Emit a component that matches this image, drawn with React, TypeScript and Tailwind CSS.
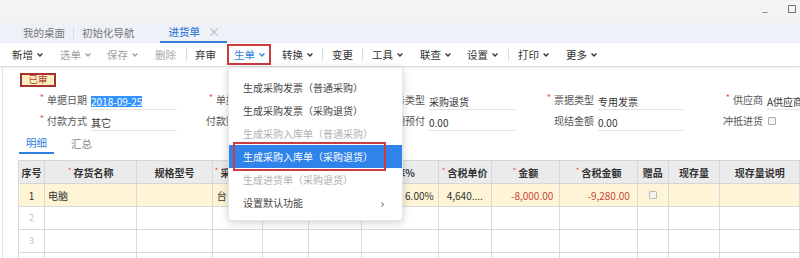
import React from "react";

type Field = {
  req?: boolean;
  label: string;
  value?: string;
  selected?: boolean;
  checkbox?: boolean;
};

const row1: Field[] = [
  { req: true, label: "单据日期", value: "2018-09-25", selected: true },
  { req: true, label: "单据编号", value: "" },
  { req: true, label: "业务类型", value: "采购退货" },
  { req: true, label: "票据类型", value: "专用发票" },
  { req: true, label: "供应商", value: "A供应商" },
];

const row2: Field[] = [
  { req: true, label: "付款方式", value: "其它" },
  { label: "付款账户名", value: "" },
  { label: "本期预付", value: "0.00" },
  { label: "现结金额", value: "0.00" },
  { label: "冲抵进货", checkbox: true },
];

const cols = [
  { w: "w-[26px]", title: "序号" },
  { w: "w-[93px]", title: "存货名称", req: true },
  { w: "w-[76px]", title: "规格型号" },
  { w: "w-[46px]", title: "采购单位", req: true, left: true },
  { w: "w-[46px]", title: "数量" },
  { w: "w-[54px]", title: "单价" },
  { w: "w-[77px]", title: "税率%" },
  { w: "w-[53px]", title: "含税单价", req: true },
  { w: "w-[69px]", title: "金额", req: true },
  { w: "w-[78px]", title: "含税金额", req: true },
  { w: "w-[31px]", title: "赠品" },
  { w: "w-[52px]", title: "现存量" },
  { w: "w-[80px]", title: "现存量说明" },
];

const menu = [
  { t: "生成采购发票（普通采购）" },
  { t: "生成采购发票（采购退货）" },
  { t: "生成采购入库单（普通采购）", off: true },
  { t: "生成采购入库单（采购退货）", on: true },
  { t: "生成进货单（采购退货）", off: true },
  { t: "设置默认功能", sub: true },
];

function Chev() {
  return (
    <svg width="6" height="4" viewBox="0 0 6 4" className="shrink-0">
      <path d="M0.6 0.6 L3 3 L5.4 0.6" stroke="currentColor" strokeWidth="1.4" fill="none" />
    </svg>
  );
}

function Sep() {
  return <div className="w-px h-[13px] bg-[#dcdcdc] shrink-0" />;
}

function Star() {
  return <span className="text-[#e5533d] text-[9px] mr-[3px] relative top-[-2px]">*</span>;
}

function FormRow({ items }: { items: Field[] }) {
  return (
    <div className="flex h-[21px] items-center">
      {items.map((f, i) => (
        <div key={i} className="flex w-[169px] items-center shrink-0">
          <div className="w-[70px] text-right pr-[4px] text-[#555] whitespace-nowrap flex justify-end items-center">
            {f.req && <Star />}
            {f.label}
          </div>
          {f.checkbox ? (
            <div className="w-[8px] h-[8px] border border-[#aaa] rounded-[1px] bg-[#f5f5f5] ml-[1px]" />
          ) : (
            <div className="w-[86px] h-[17px] mt-[4px] border-b border-[#e3e3e3] flex items-center">
              {f.selected ? (
                <span className="bg-[#3393ff] text-white leading-[11px]">{f.value}</span>
              ) : (
                <span className="text-[#333]">{f.value}</span>
              )}
            </div>
          )}
        </div>
      ))}
    </div>
  );
}

export default function App() {
  return (
    <div className="relative w-[800px] h-[258px] overflow-hidden bg-white font-['Noto_Sans_CJK_SC','Microsoft_YaHei',sans-serif] text-[10px] text-[#333]">
      {/* window title bar */}
      <div className="h-[22px] bg-[#f3f3f3] flex items-center justify-end">
        <span className="text-[#666] text-[11px] mr-[20px] leading-none">–</span>
        <div className="w-[8px] h-[8px] border border-[#777] mr-[4px] mt-[-4px]" />
      </div>

      {/* page tabs */}
      <div className="h-[21px] bg-[#eef1f8] flex items-stretch pl-[23px] text-[10.5px]">
        <div className="flex items-center text-[#777]">我的桌面</div>
        <div className="flex items-center px-[8px]">
          <div className="w-px h-[12px] bg-[#d5d9e2]" />
        </div>
        <div className="flex items-center text-[#777]">初始化导航</div>
        <div className="ml-[25px] w-[67px] flex items-center pl-[9px] border-b-2 border-[#3a7fd6] text-[#3a7fd6] font-medium">
          进货单
          <span className="ml-[8px] text-[#b5b5b5] font-normal text-[12px] leading-none">×</span>
        </div>
      </div>

      {/* toolbar */}
      <div className="h-[24px] flex items-center pl-[12px] text-[10.5px] text-[#333] border-b border-[#e2e2e2] shadow-[0_1px_2px_rgba(0,0,0,0.08)]">
        <div className="w-[48px] flex items-center gap-[4px]">新增<Chev /></div>
        <div className="w-[47px] flex items-center gap-[4px] text-[#a0a0a0]">选单<Chev /></div>
        <div className="w-[48px] flex items-center gap-[4px] text-[#a0a0a0]">保存<Chev /></div>
        <div className="w-[31px] text-[#a8a8a8]">删除</div>
        <Sep />
        <div className="w-[32px] ml-[8px]">弃审</div>
        <div className="w-[44px] h-[21px] border-2 border-[#cc3b3e] flex items-center pl-[5px] gap-[4px] text-[#2f7fe0]">
          生单<Chev />
        </div>
        <div className="w-[40px] ml-[11px] flex items-center gap-[4px]">转换<Chev /></div>
        <Sep />
        <div className="w-[30px] ml-[9px]">变更</div>
        <Sep />
        <div className="w-[48px] ml-[9px] flex items-center gap-[4px]">工具<Chev /></div>
        <div className="w-[47px] flex items-center gap-[4px]">联查<Chev /></div>
        <div className="w-[41px] flex items-center gap-[4px]">设置<Chev /></div>
        <Sep />
        <div className="w-[48px] ml-[9px] flex items-center gap-[4px]">打印<Chev /></div>
        <div className="flex items-center gap-[4px]">更多<Chev /></div>
      </div>

      {/* body */}
      <div className="ml-[2px] border-l border-[#e3e3e3] h-[191px] pt-[6px]">
        <div className="pl-[17px]">
          <div className="w-[36px] h-[14px] bg-[#fcefc2] border-2 border-[#a8332c] text-[#b23a2e] text-[9.5px] flex items-center justify-center leading-none">
            已审
          </div>
        </div>

        <div className="pl-[18px] mt-[2px]">
          <FormRow items={row1} />
          <FormRow items={row2} />
        </div>

        <div className="flex pl-[16px] mt-[2px] h-[21px] items-stretch text-[10.5px]">
          <div className="w-[35px] flex items-center justify-center text-[#2f7fe0] border-b-2 border-[#2f7fe0]">明细</div>
          <div className="ml-[17px] flex items-center text-[#888]">汇总</div>
        </div>

        <div className="pl-[15px] mt-[6px]">
          <table className="table-fixed border-collapse text-[10px]">
            <colgroup>
              {cols.map((c, i) => (
                <col key={i} className={c.w} />
              ))}
            </colgroup>
            <thead>
              <tr className="h-[23px] bg-[#ebebeb]">
                {cols.map((c, i) => (
                  <th
                    key={i}
                    className={
                      "border border-[#d6d6d6] font-bold text-[#333] whitespace-nowrap overflow-hidden px-[2px] " +
                      (c.left ? "text-left" : "text-center")
                    }
                  >
                    {c.req && <span className="text-[#e5533d] text-[8px] mr-[2px] relative top-[-3px] font-normal">*</span>}
                    {c.title}
                  </th>
                ))}
              </tr>
            </thead>
            <tbody>
              <tr className="h-[23px] bg-[#fdf5d5]">
                <td className="border border-[#dadada] text-center">1</td>
                <td className="border border-[#dadada] pl-[3px]">电脑</td>
                <td className="border border-[#dadada]"></td>
                <td className="border border-[#dadada] pl-[4px]">台</td>
                <td className="border border-[#dadada]"></td>
                <td className="border border-[#dadada]"></td>
                <td className="border border-[#dadada] text-right pr-[4px]">6.00%</td>
                <td className="border border-[#dadada] pl-[8px] whitespace-nowrap overflow-hidden">4,640....</td>
                <td className="border border-[#dadada] text-right pr-[6px] text-[#c8463a]">-8,000.00</td>
                <td className="border border-[#dadada] text-right pr-[7px] text-[#c8463a]">-9,280.00</td>
                <td className="border border-[#dadada]">
                  <div className="mx-auto w-[8px] h-[8px] border border-[#bbb] rounded-[1px] bg-[#f3f3f3]" />
                </td>
                <td className="border border-[#dadada]"></td>
                <td className="border border-[#dadada]"></td>
              </tr>
              {[2, 3, 4].map((n) => (
                <tr key={n} className="h-[23px] bg-white">
                  <td className="border border-[#dadada] text-center text-[#c4c4c4] text-[9px]">{n}</td>
                  {cols.slice(1).map((_, i) => (
                    <td key={i} className="border border-[#dadada]"></td>
                  ))}
                </tr>
              ))}
            </tbody>
          </table>
        </div>
      </div>

      {/* 生单 dropdown */}
      <div className="absolute left-[228px] top-[67px] w-[175px] h-[154px] bg-white rounded-b-[3px] shadow-[0_2px_8px_rgba(0,0,0,0.18)] border border-[#e6e6e6] pt-[8px] text-[10px]">
        {menu.map((m, i) => (
          <div
            key={i}
            className={
              "h-[23px] flex items-center pl-[14px] pr-[18px] justify-between " +
              (m.on ? "bg-[#2f83ea] text-white" : m.off ? "text-[#b0b0b0]" : "text-[#444]")
            }
          >
            <span>{m.t}</span>
            {m.sub && <span className="text-[#555] text-[12px] leading-none">›</span>}
          </div>
        ))}
        <div className="absolute left-[4px] top-[74px] w-[153px] h-[29px] border-2 border-[#cc3b3e] pointer-events-none" />
      </div>
    </div>
  );
}
